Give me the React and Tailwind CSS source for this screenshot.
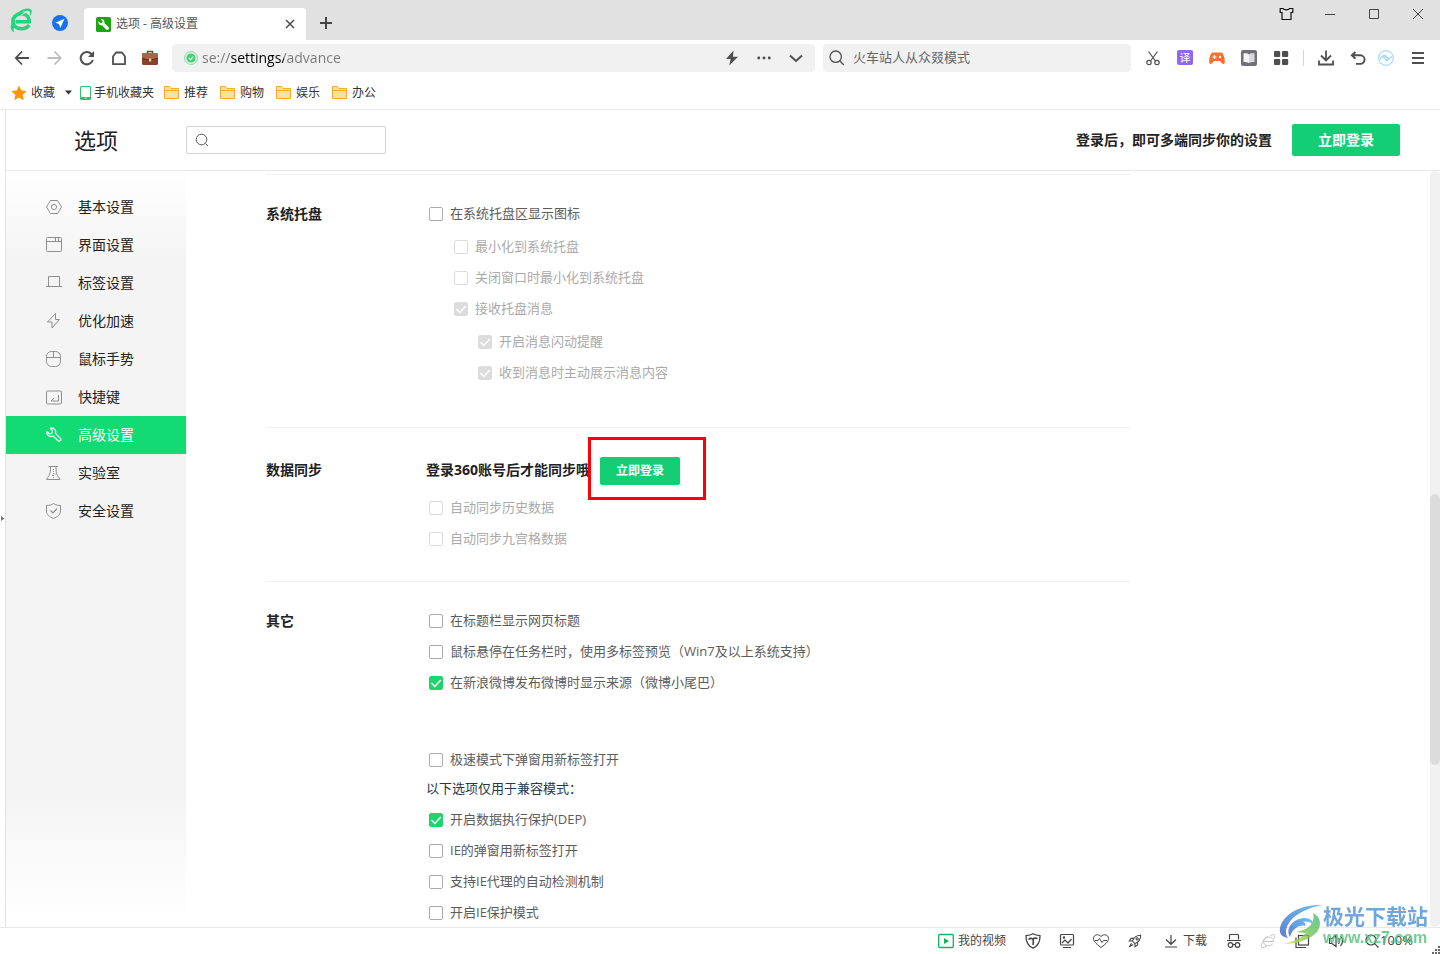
import React from "react";

function Svg({ size = 16, box = 16, className = "", children, ...rest }) {
  return (
    <svg
      width={size}
      height={size}
      viewBox={`0 0 ${box} ${box}`}
      fill="none"
      stroke="currentColor"
      strokeWidth="1"
      aria-hidden="true"
      className={`shrink-0 ${className}`}
      {...rest}
    >
      {children}
    </svg>
  );
}

const iconButton = "flex w-4 shrink-0 items-center justify-center overflow-visible";

function IconButton({ label, className = "", children }) {
  return (
    <button type="button" aria-label={label} className={`${iconButton} ${className}`}>
      {children}
    </button>
  );
}

/* ---------- tab strip ---------- */

function BrowserLogo() {
  return (
    <Svg size={24} box={24} className="text-[#1fd67c]">
      <path d="M6.500 13.800H20.200C20.200 8.500 16.800 5.800 12.500 5.800 7.500 5.800 4 9 4 13.300 4 17.800 7.500 20.800 12.500 20.800 16 20.800 18.500 19.500 20.200 17" strokeWidth="3.600" />
      <path fill="currentColor" stroke="none" d="M2.200 12C4 7 11 2 17 .8 21 0 23.500 1.500 22.600 5 22.200 6.500 21.500 7.500 20.500 8.500 21.500 5.500 21.500 3.300 19.500 2.900 15 2.200 7 7 2.200 12Z" />
      <path fill="currentColor" stroke="none" d="M3 14C1.200 18 .8 22.500 5.500 24.500 4.200 22.500 4.300 20.500 5.500 18.500Z" />
      <path d="M11.500 7.500C13.500 6.500 15 5 17 4.300" stroke="#e1e1e1" strokeWidth="1" />
    </Svg>
  );
}

function TabStrip() {
  return (
    <div className="flex h-10 shrink-0 bg-[#e1e1e1]">
      <div className="flex w-[84px] items-center gap-[19px] pl-[9px]">
        <button type="button" aria-label="浏览器主菜单"><BrowserLogo /></button>
        <button type="button" aria-label="导航" className="pt-[6px]">
          <Svg stroke="none">
            <circle cx="8" cy="8" r="8" fill="#1672f0" />
            <path fill="#fff" d="M12.500 3.700 3.400 7.700 7 9 8.300 12.900Z" />
          </Svg>
        </button>
      </div>
      <div className="mt-2 flex w-[222px] items-center rounded-t bg-white pl-3 pr-[11px]">
        <Svg size={15} stroke="none">
          <rect width="16" height="16" rx="2" fill="#1da510" />
          <path
            fill="#fff"
            d="M2.700 4.500 4.700 6.500 6.500 6 7 4.200 5 2.300C7 1.700 9.500 3.500 9 6.300L13.300 10.600A1.700 1.700 0 0 1 10.800 13.200L6.600 8.900C4.200 9.500 2 7 2.700 4.500Z"
          />
        </Svg>
        <span className="ml-[5px] flex-1 text-xs text-[#555]">选项 - 高级设置</span>
        <button type="button" aria-label="关闭标签页">
          <Svg size={10} box={10} className="text-[#444]" strokeWidth="1.4"><path d="m1 1 8 8M9 1 1 9" /></Svg>
        </button>
      </div>
      <button type="button" aria-label="新建标签页" className="mt-[6px] flex w-10 items-center justify-center">
        <Svg size={12} box={12} className="text-[#444]" strokeWidth="2"><path d="M6 0v12M0 6h12" /></Svg>
      </button>
      <div className="ml-auto flex h-7 items-center gap-7 pr-[14px] text-[#444]">
        <IconButton label="皮肤">
          <Svg className="text-[#111]" strokeWidth="1.200">
            <path d="M5 2.500H2.200v4H4v7h9v-7h1.800v-4H11.500C11 4.200 5.700 4.200 5 2.500Z" />
          </Svg>
        </IconButton>
        <IconButton label="最小化"><Svg size={10} box={10}><path d="M0 5.500h10" /></Svg></IconButton>
        <IconButton label="最大化"><Svg size={10} box={10}><path d="M.5.5h9v9h-9z" /></Svg></IconButton>
        <IconButton label="关闭"><Svg size={12} box={12}><path d="m1 1 10 10M11 1 1 11" /></Svg></IconButton>
      </div>
    </div>
  );
}

/* ---------- toolbar ---------- */

function Toolbar() {
  return (
    <div className="flex h-9 shrink-0 items-center px-[14px] text-[#4f4f4f]">
      <div className="flex gap-4">
        <IconButton label="后退"><Svg strokeWidth="1.800"><path d="M8 1.500 1.800 8 8 14.500M2 8h13" /></Svg></IconButton>
        <IconButton label="前进" className="text-[#bdbdbd]"><Svg strokeWidth="1.800"><path d="M8.500 1.500 14.700 8 8.500 14.500M14.500 8h-13" /></Svg></IconButton>
        <IconButton label="刷新">
          <Svg strokeWidth="2">
            <path d="M14.800 10A6.200 6.200 0 1 1 13.500 4L15 5.500" />
            <path d="M16 1v6H10z" fill="currentColor" stroke="none" />
          </Svg>
        </IconButton>
        <IconButton label="主页"><Svg strokeWidth="1.800"><path d="M3 14.200V6.500L6 2.500h6l3 4v7.700z" strokeLinejoin="round" /></Svg></IconButton>
        <IconButton label="工具箱">
          <Svg stroke="none">
            <path d="M5.500 3V1.500h5V3" stroke="#7c3f2b" strokeWidth="1.500" />
            <rect y="3" width="16" height="12" rx="1.500" fill="#87432c" />
            <path d="M0 4.500A1.500 1.500 0 0 1 1.500 3h13A1.500 1.500 0 0 1 16 4.500V8L10 9.500H6L0 8z" fill="#a8654a" />
            <path d="M0 8.300 6 9.700h4l6-1.400" stroke="#5d2a1a" strokeWidth=".8" />
            <rect x="7" y="8.500" width="2.200" height="3" rx=".6" fill="#f3d98b" />
          </Svg>
        </IconButton>
      </div>

      <div className="ml-[14px] flex h-7 flex-1 items-center rounded bg-[#f1f1f1] pl-3 pr-[11px]">
        <Svg size={14} box={14} stroke="none">
          <circle cx="7" cy="7" r="6.400" stroke="#7ddc9a" strokeWidth="1" />
          <circle cx="7" cy="7" r="4.600" fill="#46cf73" />
          <path d="m4.800 7 1.700 1.700 2.900-3" stroke="#fff" strokeWidth="1.200" />
        </Svg>
        <input
          aria-label="地址栏"
          defaultValue="se://settings/advance"
          className="ml-1 min-w-0 flex-1 bg-[linear-gradient(90deg,#777_29px,#000_29px,#000_82px,#777_82px)] bg-clip-text text-sm text-transparent outline-none"
        />
        <div className="flex gap-4">
          <IconButton label="极速模式"><Svg stroke="none"><path fill="currentColor" d="M9.500.5 2 9h4.600L5.300 15.500 14 6.700H9z" /></Svg></IconButton>
          <IconButton label="更多"><Svg size={14} stroke="none"><g fill="currentColor"><circle cx="2" cy="8" r="1.700" /><circle cx="8" cy="8" r="1.700" /><circle cx="14" cy="8" r="1.700" /></g></Svg></IconButton>
          <IconButton label="展开"><Svg strokeWidth="2"><path d="m2 5.500 6 5.500 6-5.500" /></Svg></IconButton>
        </div>
      </div>

      <div className="ml-2 flex h-7 w-[308px] items-center rounded bg-[#f1f1f1] pl-[6px]">
        <Svg strokeWidth="1.300"><circle cx="6.700" cy="6.700" r="5.700" /><path d="m11 11 3.800 4" /></Svg>
        <input
          aria-label="搜索"
          placeholder="火车站人从众叕模式"
          className="ml-2 min-w-0 flex-1 bg-transparent text-[13px] outline-none placeholder:text-[#666]"
        />
      </div>

      <div className="ml-[14px] flex gap-4">
        <IconButton label="截图">
          <Svg strokeWidth="1.200"><path d="M3.500 1.500 10.500 11M12.500 1.500 5.500 11" /><circle cx="4" cy="12.500" r="2.200" /><circle cx="12" cy="12.500" r="2.200" /></Svg>
        </IconButton>
        <button type="button" className="flex h-[15px] w-4 items-center justify-center rounded-xs bg-[#8f66fb] text-[11px] leading-none text-white">译</button>
        <IconButton label="游戏">
          <Svg stroke="none">
            <path fill="#f9702b" d="M3.500 2.500h9C15 4 16.500 10 15.500 13.500 14 15 12.500 13 11 11H5C3.500 13 2 15 .5 13.500-.5 10 1 4 3.500 2.500Z" />
            <path d="M5.500 5v4M3.500 7h4" stroke="#fff" strokeWidth="1.200" />
            <circle cx="11" cy="7" r="1.200" fill="#fff" />
          </Svg>
        </IconButton>
        <IconButton label="阅读">
          <Svg stroke="none">
            <rect width="16" height="16" rx="2" fill="#707078" />
            <path fill="#f5f5f5" d="M2.500 3.500C5 2.800 7 3.500 8 4.500v8.500C6.500 12 4.500 12 2.500 12z" />
            <path fill="#d9d9dc" d="M13.500 3.500C11 2.800 9 3.500 8 4.500v8.500c1.500-1 3.500-1 5.500-1z" />
          </Svg>
        </IconButton>
        <IconButton label="扩展">
          <Svg stroke="none">
            <g fill="currentColor"><rect x="1" y="1" width="6.200" height="6" rx="1" /><rect x="9" y="1" width="6.200" height="6" rx="1" /><rect x="1" y="9" width="6.200" height="6" rx="1" /><rect x="9" y="9" width="6.200" height="6" rx="1" /></g>
          </Svg>
        </IconButton>
      </div>
      <span className="mx-[14px] h-4 w-px bg-[#d5d5d5]" />
      <div className="flex gap-4">
        <IconButton label="下载内容"><Svg strokeWidth="1.800"><path d="M8 .5v10M3 5.500l5 5 5-5M1 10.500v4h14v-4" /></Svg></IconButton>
        <IconButton label="撤销关闭"><Svg strokeWidth="1.900"><path d="M1.800 5.300h8.500a4.300 4.300 0 0 1 0 8.600H6M5.500 2 1.800 5.300l3.700 3.400" /></Svg></IconButton>
      </div>
      <div className="ml-3 flex gap-4">
        <IconButton label="账号">
          <Svg className="text-[#a9d8f7]">
            <circle cx="8" cy="8" r="7.300" strokeWidth="1.200" />
            <path d="M2 9.500c1-4 4-5 6-2.500s4.500 2 6-1" strokeWidth="1.200" />
            <path d="m4 8 3-3 2 2M12 8l-3 3-2-2M6 8l2 2 2-2-2-2z" strokeWidth="1.200" />
          </Svg>
        </IconButton>
        <IconButton label="菜单"><Svg strokeWidth="2"><path d="M2 3h12M2 8h12M2 13h12" /></Svg></IconButton>
      </div>
    </div>
  );
}

function Bookmarks() {
  return (
    <nav className="flex h-[34px] shrink-0 items-center border-b border-[#ececec] pl-[11px] text-xs text-[#333]">
      <button type="button" className="flex items-center gap-1">
        <Svg stroke="none"><path fill="#ff9500" d="m8 .5 2.300 4.900 5.400.7-4 3.700 1 5.400L8 12.600l-4.700 2.600 1-5.400-4-3.700 5.400-.7z" /></Svg>
        收藏
      </button>
      <button type="button" aria-label="收藏菜单" className="ml-[10px]">
        <Svg size={7} box={7} stroke="none"><path fill="currentColor" d="M0 1.500h7l-3.500 4z" /></Svg>
      </button>
      <a href="#mobile" className="ml-2 flex items-center gap-[3px]">
        <svg width="11" height="14" viewBox="0 0 11 14" fill="none" stroke="#2fc16f" aria-hidden="true"><rect x=".5" y=".5" width="10" height="13" rx=".5" /><path d="M1 12h9" strokeWidth="2" /><path d="M5 12h1.500" stroke="#fff" /></svg>
        手机收藏夹
      </a>
      <div className="ml-[10px] flex gap-3">
        {["推荐", "购物", "娱乐", "办公"].map((name) => (
          <a key={name} href="#folder" className="flex items-center gap-[5px]">
            <svg width="15" height="13" viewBox="0 0 15 13" fill="#ffe2a3" stroke="#f8ab22" aria-hidden="true"><path d="M.5.500h5l1.500 2h7.500v10H.5z" /><path d="M1 4.500h13" /></svg>
            {name}
          </a>
        ))}
      </div>
    </nav>
  );
}

/* ---------- settings page ---------- */

const navItems = [
  ["基本设置", <><path d="M4.500 1.500h7L15.500 8l-4 6.500h-7L.5 8z" strokeLinejoin="round" /><circle cx="8" cy="8" r="2.600" /></>],
  ["界面设置", <><rect x=".5" y=".5" width="15" height="14" rx="1" /><path d="M1 4.500h14M9.500 1v3M12.500 1v3" /></>],
  ["标签设置", <><path d="M2.500 11V1.500h11V11M0 11.500h16" /></>],
  ["优化加速", <><path d="M9.500.5 1.500 9H6v6l7.500-8.500H9.500z" strokeLinejoin="round" /></>],
  ["鼠标手势", <><rect x=".5" y=".5" width="14" height="15" rx="5" /><path d="M.5 6.500h14M7.500.5v6" /></>],
  ["快捷键", <><rect x=".5" y="2" width="15" height="13" rx="1" /><path d="M12.500 6v6H5.500M8 9 5 12" /></>],
  ["高级设置", <><path d="M1 4.500 3.500 7 6 6 6.500 3.500 4.300 1.300C7.500.3 10.500 3 9.500 6.300L14.400 11.300A1.700 1.700 0 0 1 12 13.700L7 9C3.500 10.500 0 7.500 1 4.500Z" strokeLinejoin="round" strokeWidth="1.200" /></>],
  ["实验室", <><path d="M2.500 1.500h9.500M4.500 1.500c0 8-1 8-4 13h13.500c-3-5-4-5-4-13" /><path d="M7.500 4v9M6 10.500h1M9 8.500v1" strokeDasharray="1 1" /></>],
  ["安全设置", <><path d="M7.500.5C9.500 2 12 2.500 14.500 2.500V8c0 3.500-3 6-7 7.500C3.500 14 .5 11.500.5 8V2.500C3 2.500 5.500 2 7.500.5Z" /><path d="m4.500 7.500 2.500 2.500 4-4.500" strokeWidth="1.200" /></>],
];

function Sidebar() {
  return (
    <nav className="flex w-[180px] shrink-0 flex-col bg-[linear-gradient(180deg,#fff_0%,#f4f4f4_12%,#f4f4f4_82%,#fff_99%)] pt-[17px]">
      {navItems.map(([label, icon]) => {
        const active = label === "高级设置";
        return (
          <a
            key={label}
            href="#section"
            aria-current={active ? "page" : undefined}
            className={`flex h-[38px] items-center gap-4 pl-10 text-sm ${active ? "bg-[#12db73] text-white" : "text-[#222]"}`}
          >
            <Svg className={active ? "text-white" : "text-[#8f8f8f]"}>{icon}</Svg>
            {label}
          </a>
        );
      })}
    </nav>
  );
}

function Check({ children, checked = false, disabled = false }) {
  return (
    <label className={`flex h-[21px] items-center gap-[7px] pl-[3px] text-[13px] ${disabled ? "text-[#aaa]" : "text-[#5c5c5c]"}`}>
      <span className="grid size-[14px] shrink-0 text-white">
        <input
          type="checkbox"
          defaultChecked={checked}
          disabled={disabled}
          className="peer col-start-1 row-start-1 size-[14px] appearance-none rounded-xs border border-[#aaa] bg-white checked:border-[#1cd66c] checked:bg-[#1cd66c] disabled:border-[#dcdcdc] disabled:checked:bg-[#dcdcdc]"
        />
        <Svg size={14} box={14} strokeWidth="1.500" className="pointer-events-none col-start-1 row-start-1 hidden peer-checked:block">
          <path d="m2.500 7 3.300 3.500L11.800 4" />
        </Svg>
      </span>
      {children}
    </label>
  );
}

function Section({ title, className = "", titleClass = "h-[21px]", children }) {
  return (
    <section className={`flex border-t border-[#f0f0f0] pt-7 ${className}`}>
      <h2 className={`flex w-40 shrink-0 items-center text-sm font-bold text-[#222] ${titleClass}`}>{title}</h2>
      <div className="flex flex-1 flex-col items-start gap-[10px]">{children}</div>
    </section>
  );
}

function SettingsContent() {
  return (
    <main className="min-w-0 flex-1 overflow-hidden pl-20 pt-[3px]">
      <div className="max-w-[864px]">
        <Section title="系统托盘" className="pb-11">
          <Check>在系统托盘区显示图标</Check>
          <div className="flex flex-col items-start gap-[10px] pl-[25px] pt-[2px]">
            <Check disabled>最小化到系统托盘</Check>
            <Check disabled>关闭窗口时最小化到系统托盘</Check>
            <Check disabled checked>接收托盘消息</Check>
            <div className="flex flex-col items-start gap-[10px] pl-6 pt-[2px]">
              <Check disabled checked>开启消息闪动提醒</Check>
              <Check disabled checked>收到消息时主动展示消息内容</Check>
            </div>
          </div>
        </Section>

        <Section title="数据同步" className="pb-8" titleClass="h-7">
          <div className="mb-[3px] flex h-7">
            <strong className="flex w-[174px] items-center whitespace-nowrap text-sm font-bold text-[#222]">登录360账号后才能同步哦</strong>
            <div className="relative mt-px">
              <button type="button" className="block h-7 w-20 rounded-xs bg-[#13ce75] text-xs font-bold text-white">立即登录</button>
              <span className="pointer-events-none absolute -bottom-4 -left-3 -right-[26px] -top-5 border-3 border-[#fb0007]" />
            </div>
          </div>
          <Check disabled>自动同步历史数据</Check>
          <Check disabled>自动同步九宫格数据</Check>
        </Section>

        <Section title="其它">
          <Check>在标题栏显示网页标题</Check>
          <Check>鼠标悬停在任务栏时，使用多标签预览（Win7及以上系统支持）</Check>
          <Check checked>在新浪微博发布微博时显示来源（微博小尾巴）</Check>
          <div className="flex flex-col items-start gap-2 pt-[46px]">
            <Check>极速模式下弹窗用新标签打开</Check>
            <p className="flex h-[21px] items-center text-[13px] text-[#27374d]">以下选项仅用于兼容模式：</p>
          </div>
          <Check checked>开启数据执行保护(DEP)</Check>
          <Check>IE的弹窗用新标签打开</Check>
          <Check>支持IE代理的自动检测机制</Check>
          <Check>开启IE保护模式</Check>
        </Section>
      </div>
    </main>
  );
}

function SettingsPage() {
  return (
    <div className="flex min-h-0 flex-1">
      <button type="button" aria-label="展开侧边栏" className="flex w-[6px] shrink-0 items-center border-r border-[#e2e2e2]">
        <Svg size={5} box={5} stroke="none"><path fill="#777" d="M1 0v5l3.500-2.500z" /></Svg>
      </button>
      <div className="flex min-w-0 flex-1 flex-col">
        <header className="flex h-[61px] shrink-0 items-center border-b border-[#e8e8e8] pr-10">
          <h1 className="w-[180px] text-center text-[22px] text-[#222]">选项</h1>
          <label className="flex h-7 w-[200px] items-center rounded-xs border border-[#d4d4d4] pl-2">
            <Svg className="text-[#555]"><circle cx="6.500" cy="7.500" r="5.300" /><path d="m10.500 11.500 2.500 2.500" /></Svg>
            <input type="search" aria-label="搜索设置" className="min-w-0 flex-1 bg-transparent pl-1 text-sm outline-none" />
          </label>
          <p className="ml-auto text-sm font-bold text-[#222]">登录后，即可多端同步你的设置</p>
          <button type="button" className="ml-5 h-8 w-[108px] rounded-xs bg-[#13ce75] text-sm font-bold text-white">立即登录</button>
        </header>
        <div className="flex min-h-0 flex-1">
          <Sidebar />
          <SettingsContent />
          <div className="flex w-[10px] shrink-0 flex-col rounded-full bg-[#f0f0f0]">
            <div className="flex-[323]" />
            <div className="flex-[271] rounded-full bg-[#dcdcdc]" />
            <div className="flex-[162]" />
          </div>
        </div>
      </div>
    </div>
  );
}

/* ---------- status bar ---------- */

function Watermark() {
  return (
    <div className="pointer-events-none absolute bottom-[6px] right-[10px] flex items-start opacity-80">
      <svg width="44" height="44" viewBox="0 0 44 44" aria-hidden="true">
        <defs>
          <linearGradient id="swirlBlue" x1="0" y1="1" x2="1" y2="0"><stop stopColor="#3a5fc4" /><stop offset="1" stopColor="#49b4ee" /></linearGradient>
          <linearGradient id="swirlGreen" x1="0" y1="1" x2="1" y2="0"><stop stopColor="#e3dd45" /><stop offset=".5" stopColor="#74c855" /><stop offset="1" stopColor="#3fb978" /></linearGradient>
        </defs>
        <path fill="url(#swirlBlue)" d="M43 1C24 0 4 9 1 24c-1 6 2 9 8 10C5 29 7 21 14 14 21 8 32 3 43 1Z" />
        <path fill="url(#swirlBlue)" d="M11 33c-5-9 3-18 14-19 5 0 9 2 9 6-4-3-8-3-11-2 3 0 4 2 3 4-5-2-13 3-15 11Z" />
        <path fill="url(#swirlGreen)" d="M34 9c8 4 9 12 4 19C31 36 18 40 4 40c10-2 18-6 23-11-3 0-7 0-9-2 9 0 19-7 16-18Z" />
      </svg>
      <div className="w-[107px] whitespace-nowrap font-bold">
        <div className="text-[21px] leading-6 text-[#4d90d6]">极光下载站</div>
        <div className="font-['Liberation_Sans'] text-base leading-5 text-[#52c27a]">www.xz7.com</div>
      </div>
    </div>
  );
}

function StatusBar() {
  return (
    <footer className="relative flex h-[27px] shrink-0 items-center justify-end border-t border-[#e8e8e8] pr-[27px] text-xs text-[#444]">
      <button type="button" className="mr-[19px] flex items-center gap-1">
        <Svg className="text-[#12b35a]" strokeWidth="1.300"><rect x=".7" y="1.500" width="14.600" height="13" rx="1" /><path d="M6 5v6l5-3z" fill="currentColor" stroke="none" /></Svg>
        我的视频
      </button>
      <div className="flex gap-[18px]">
        <IconButton label="防护">
          <Svg strokeWidth="1.300"><path d="M8 .8C10 2 12.500 2.500 15 2.600 15.200 9 13 13 8 15.200 3 13 .8 9 1 2.600 3.500 2.500 6 2 8 .8Z" /><path d="M3.500 6.500C5.500 4.500 7 5.500 8 6c1-1 3-1 4.500-.5M8 6C8.500 8 8.500 10 8 12" strokeWidth="1.600" /></Svg>
        </IconButton>
        <IconButton label="图片"><Svg strokeWidth="1.200"><rect x="1.500" y="1.500" width="13" height="10.500" rx="1" /><path d="m3 10 3-3 3 3 3.500-4M4 14.500h8" /><circle cx="5" cy="4.500" r=".6" /></Svg></IconButton>
        <IconButton label="健康"><Svg><path d="M8 14.500C2 10 .5 8 .5 5.300.5 2 5 .3 8 3.500c3-3.200 7.500-1.500 7.500 1.800C15.500 8 14 10 8 14.500Z" /><path d="M2 7.500h3l1.500-2 2.500 4 1.500-2H14" /></Svg></IconButton>
        <IconButton label="加速"><Svg size={14} strokeWidth="1.200"><path d="M14.500 1.500C10 1.500 6.500 4.500 5 8l3 3c4-1.500 6.500-5 6.500-9.500ZM7 5H3.500L1.500 8 5 8M11 9v3.500l-3 2V11M4 10.500 1.500 14.500 6 12" /><circle cx="10.500" cy="5.500" r="1.300" /></Svg></IconButton>
      </div>
      <button type="button" className="ml-5 flex items-center gap-1">
        <Svg strokeWidth="1.200"><path d="M8 2v9M3 6.500l5 4.800 5-4.800M2 14h12" /></Svg>
        下载
      </button>
      <div className="ml-[19px] flex gap-[18px]">
        <IconButton label="无痕"><Svg strokeWidth="1.200"><path d="M3.500 6.500v-4q0-1 1-1h7q1 0 1 1v4M1 7.500h14" /><circle cx="4.500" cy="12" r="2.300" /><circle cx="11.500" cy="12" r="2.300" /><path d="M7 11.500h2" /></Svg></IconButton>
        <IconButton label="兼容模式" className="text-[#c4c4c4]"><Svg><path d="M4 8.500h9.500c0-6-10-6-10 0 0 5 7.500 5.500 9.500 2M10 3c4-3 6-.5 4 2.500M8 3.500C2 7-1 15 3 14.500q2 0 4-2" /></Svg></IconButton>
        <IconButton label="分屏"><Svg strokeWidth="1.200"><rect x="4.500" y="2.500" width="10" height="9.500" /><path d="M2 4.500v10h10" /></Svg></IconButton>
        <IconButton label="声音"><Svg strokeWidth="1.200"><path d="M1.500 5.500h2.500L8 2.500v11L4 10.500H1.500zM10.500 5q2 3 0 6M12.500 3q4 5 0 10" /></Svg></IconButton>
      </div>
      <button type="button" className="ml-5 flex items-center text-[13px]">
        <Svg strokeWidth="1.200"><circle cx="7" cy="7" r="5" /><path d="m10.800 10.800 3.700 3.700" /></Svg>
        100%
      </button>
      <Watermark />
      <svg width="8" height="8" viewBox="0 0 8 8" fill="#666" aria-hidden="true" className="absolute bottom-0 right-0">
        <path d="M6 0h2v2H6zM3 3h2v2H3zM6 3h2v2H6zM0 6h2v2H0zM3 6h2v2H3zM6 6h2v2H6z" />
      </svg>
    </footer>
  );
}

export default function App() {
  return (
    <div className="flex h-screen flex-col overflow-hidden bg-white font-['Open_Sans','Noto_Sans_CJK_SC',sans-serif]">
      <TabStrip />
      <Toolbar />
      <Bookmarks />
      <SettingsPage />
      <StatusBar />
    </div>
  );
}
